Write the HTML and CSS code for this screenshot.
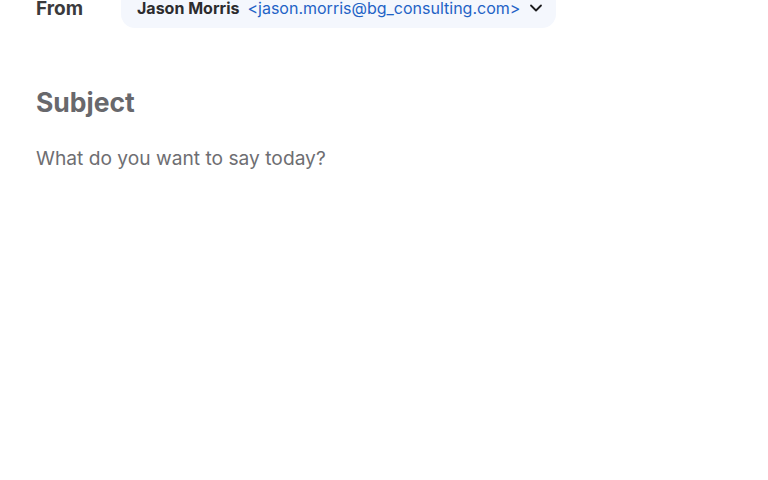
FILE: index.html
```html
<!DOCTYPE html>
<html lang="en">
<head>
  <meta charset="UTF-8" />
  <title>New message</title>
  <link rel="stylesheet" href="styles.css">
</head>
<body>
  <main class="compose">
    <div class="from-row">
      <span class="from-label">From</span>
      <button class="sender">
        <span class="sender-name">Jason Morris</span>
        <span class="sender-mail">&lt;jason.morris@bg_consulting.com&gt;</span>
        <svg class="chevron" viewBox="0 0 16 16" aria-hidden="true">
          <path d="M3 5.5l5 5 5-5" />
        </svg>
      </button>
    </div>

    <h1 class="subject">Subject</h1>
    <p class="body-placeholder">What do you want to say today?</p>
  </main>
</body>
</html>
```

FILE: styles.css
```css
*, *::before, *::after {
  box-sizing: border-box;
}

body {
  margin: 0;
  font-family: 'Inter', 'Liberation Sans', sans-serif;
  background: #fff;
  overflow: hidden;
}

.compose {
  padding: 0 36px;
}

/* Ligne expéditeur (déjà défilée vers le haut) */
.from-row {
  display: flex;
  align-items: center;
  gap: 37px;
  height: 40px;
  margin-top: -12px;
}

.from-label {
  font-size: 19px;
  font-weight: 700;
  color: #3a3a3c;
  width: 48px;
  white-space: nowrap;
}

.sender {
  display: flex;
  align-items: center;
  gap: 8px;
  height: 40px;
  padding: 0 14px 0 16px;
  border: none;
  border-radius: 14px;
  background: #f4f7fd;
  font-family: inherit;
  font-size: 16px;
  width: 435px;
  white-space: nowrap;
}

.sender-name {
  font-weight: 700;
  color: #2c2c2e;
}

.sender-mail {
  color: #1f63c6;
}

.chevron {
  width: 16px;
  height: 16px;
  flex-shrink: 0;
  fill: none;
  stroke: #1c1c1e;
  stroke-width: 1.8;
  stroke-linecap: round;
  stroke-linejoin: round;
}

.subject {
  margin: 58px 0 0;
  font-size: 26.5px;
  font-weight: 700;
  color: #68686c;
}

.body-placeholder {
  margin: 28px 0 0;
  font-size: 19.2px;
  color: #6e6e72;
}
```
